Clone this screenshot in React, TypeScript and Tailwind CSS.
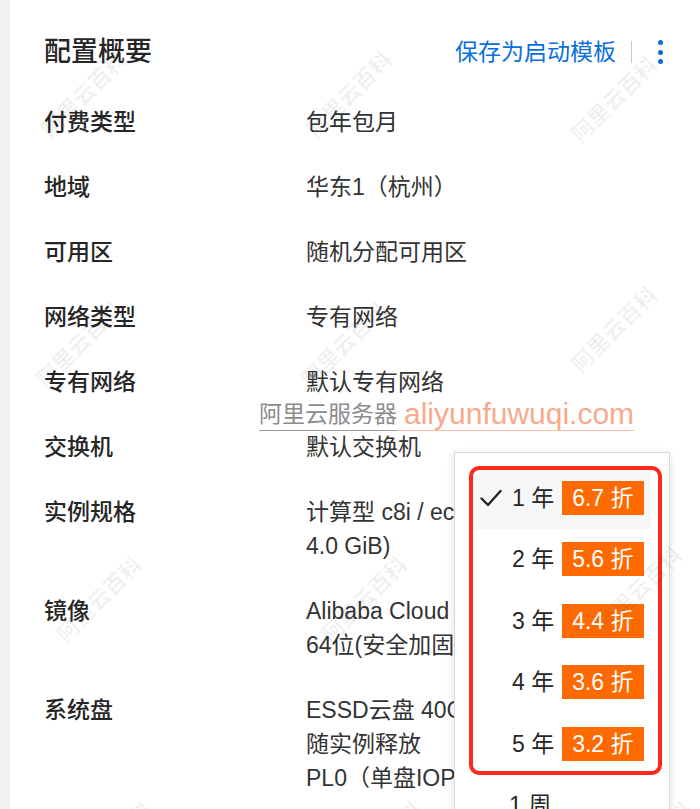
import React from "react";

const FONT = '"Liberation Sans", "Noto Sans CJK SC", sans-serif';

type Row = { label: string; lines: string[] };

const rows: Row[] = [
  { label: "付费类型", lines: ["包年包月"] },
  { label: "地域", lines: ["华东1（杭州）"] },
  { label: "可用区", lines: ["随机分配可用区"] },
  { label: "网络类型", lines: ["专有网络"] },
  { label: "专有网络", lines: ["默认专有网络"] },
  { label: "交换机", lines: ["默认交换机"] },
  { label: "实例规格", lines: ["计算型 c8i / ecs.c8i.large（2 vCPU", "4.0 GiB)"] },
  { label: "镜像", lines: ["Alibaba Cloud Linux 3.2104 LTS", "64位(安全加固)"] },
  {
    label: "系统盘",
    lines: ["ESSD云盘 40GiB 2120IOPS", "随实例释放", "PL0（单盘IOPS性能上限1万）"],
  },
];

const options = [
  { n: "1", d: "6.7", checked: true },
  { n: "2", d: "5.6" },
  { n: "3", d: "4.4" },
  { n: "4", d: "3.6" },
  { n: "5", d: "3.2" },
];

const marks: [number, number][] = [
  [85, 95],
  [350, 95],
  [615, 100],
  [80, 345],
  [345, 345],
  [615, 330],
  [100, 600],
  [365, 600],
  [640, 590],
  [110, 845],
  [380, 845],
  [650, 845],
];

function Check() {
  return (
    <svg width="22" height="18" viewBox="0 0 22 18" fill="none">
      <path d="M1.5 9.5 L8 16 L20.5 2" stroke="#262626" strokeWidth="2.4" strokeLinecap="round" strokeLinejoin="round" />
    </svg>
  );
}

export default function App() {
  return (
    <div className="relative flex h-[809px] w-[700px] overflow-hidden bg-white" style={{ fontFamily: FONT }}>
      <div className="w-[10px] shrink-0 bg-[#eff1f5]" />
      <div className="flex-1 pl-[34px] pr-[37px] pt-[35px]">
        <div className="flex h-[34px] items-center">
          <div className="text-[27px] font-medium leading-[34px] text-[#262626]">配置概要</div>
          <div className="ml-auto flex items-center">
            <span className="text-[23px] leading-[34px] text-[#0a6fdc]">保存为启动模板</span>
            <span className="ml-[15px] h-[22px] w-px bg-[#c8c8c8]" />
            <span className="ml-[26px] flex flex-col gap-[4.5px]">
              <span className="h-[5px] w-[5px] rounded-full bg-[#0a6fdc]" />
              <span className="h-[5px] w-[5px] rounded-full bg-[#0a6fdc]" />
              <span className="h-[5px] w-[5px] rounded-full bg-[#0a6fdc]" />
            </span>
          </div>
        </div>
        <div className="mt-[36px] flex flex-col gap-[31px]">
          {rows.map((r) => (
            <div key={r.label} className="flex">
              <div className="w-[262px] shrink-0 text-[23px] font-medium leading-[34px] text-[#262626]">{r.label}</div>
              <div className="w-[354px] overflow-hidden text-[23px] leading-[34px] text-[#333333]">
                {r.lines.map((l) => (
                  <div key={l} className="whitespace-nowrap">
                    {l}
                  </div>
                ))}
              </div>
            </div>
          ))}
        </div>
      </div>

      {/* site watermark */}
      <div className="pointer-events-none absolute left-[259px] top-[398px] flex items-end">
        <span className="border-b-[1.5px] border-[#9a9a9a] text-[23px] leading-[32px] text-[#8c8c8c]">阿里云服务器</span>
        <span className="border-b-[1.5px] border-[#f9b9a0] pl-[7px] text-[30px] leading-[32px] text-[#f8a98c]">aliyunfuwuqi.com</span>
      </div>

      {/* dropdown */}
      <div className="absolute left-[454px] top-[452px] h-[400px] w-[216px] border border-[#d9d9d9] bg-white shadow-[0_2px_8px_rgba(0,0,0,0.12)]">
        <div className="pt-[14px]">
          {options.map((o) => (
            <div
              key={o.n}
              className={`mx-[18px] flex h-[61.5px] items-center ${o.checked ? "bg-[#f6f7f9]" : ""}`}
            >
              <div className="flex w-[39px] shrink-0 justify-end pr-[10px]">{o.checked ? <Check /> : null}</div>
              <span className="text-[23px] leading-[34px] text-[#262626]">{o.n} 年</span>
              <span className="ml-[8px] bg-[#ff6a00] px-[10px] text-[23px] leading-[34px] text-white">{o.d} 折</span>
            </div>
          ))}
          <div className="mx-[18px] flex h-[61.5px] items-center pl-[36px]">
            <span className="text-[23px] leading-[34px] text-[#262626]">1 周</span>
          </div>
        </div>
        <div className="pointer-events-none absolute left-[14px] top-[13px] h-[309px] w-[193px] rounded-[10px] border-[4px] border-[#fd2a1a]" />
      </div>

      {/* diagonal watermarks */}
      {marks.map(([x, y], i) => (
        <div
          key={i}
          className="pointer-events-none absolute whitespace-nowrap text-[22px] font-bold leading-none text-[rgba(0,0,0,0.06)]"
          style={{ left: x - 60, top: y - 11, width: 120, transform: "rotate(-45deg)", textAlign: "center" }}
        >
          阿里云百科
        </div>
      ))}
    </div>
  );
}
